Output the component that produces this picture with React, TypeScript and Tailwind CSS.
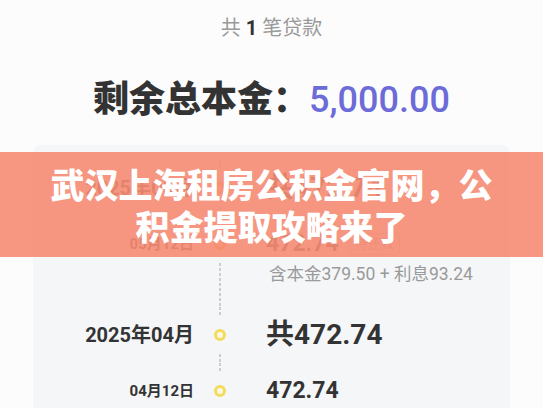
const FONT = { fontFamily: 'Roboto, "Noto Sans CJK SC", "Noto Sans", sans-serif' };

const Seg = ({ className = '' }: { className?: string }) => (
  <div className={`w-[2px] bg-[repeating-linear-gradient(to_bottom,#cdcdcd_0_3px,transparent_3px_5px)] ${className}`} />
);

const Dot = ({ warm }: { warm?: boolean }) => (
  <div
    className={
      warm
        ? 'my-[13px] h-[12px] w-[12px] shrink-0 rounded-full border-[3px] border-[#f9a03a] bg-[#fbe3c4]'
        : 'my-[13px] h-[12px] w-[12px] shrink-0 rounded-full border-[3px] border-[#f3dc5c] bg-[#fbf7e4]'
    }
  />
);

const Rail = ({ warm }: { warm?: boolean }) => (
  <div className="flex w-[26px] flex-col items-center">
    <Seg className="h-[9px]" />
    <Dot warm={warm} />
    <Seg className="flex-1" />
  </div>
);

export default function App() {
  return (
    <div className="relative h-[408px] w-full overflow-hidden bg-[#fcfcfc] text-[#333]" style={FONT}>
      <div className="flex flex-col items-center pt-[14px]">
        <p className="text-[20px] leading-[28px] text-[#999]">
          共 <span className="font-bold text-[#333]">1</span> 笔贷款
        </p>
        <h1 className="mt-[36px] text-[36px] font-black leading-[44px] text-[#333]">
          剩余总本金：<span className="font-medium text-[#6d6bd7]">5,000.00</span>
        </h1>
      </div>

      <div className="mx-[33px] mt-[23px] rounded-lg bg-[#f5f6f8] pt-[15px] pb-10">
        {/* 2025年05月 */}
        <div className="flex">
          <div className="flex h-14 w-[174px] items-center justify-end pr-[13px] text-[20px] font-bold">2025年05月</div>
          <Rail warm />
          <div className="flex h-14 items-center pl-[33px] text-[28px] font-bold">共472.74</div>
        </div>

        {/* 05月12日 */}
        <div className="flex">
          <div className="flex h-14 w-[174px] items-center justify-end pr-[13px] text-[15px] font-bold">05月12日</div>
          <Rail warm />
          <div className="flex flex-col pb-6 pl-[33px]">
            <div className="flex h-14 items-center gap-[10px]">
              <span className="text-[23px] font-bold">472.74</span>
              <span className="rounded-[3px] border border-[#c9c9c9] px-[5px] text-[13px] leading-[20px] text-[#999]">待还款</span>
            </div>
            <div className="-mt-[7px] h-[18px] pl-[3px] text-[17.5px] leading-[18px] text-[#9a9a9a]">含本金379.50 + 利息93.24</div>
          </div>
        </div>

        {/* 2025年04月 */}
        <div className="flex">
          <div className="flex h-14 w-[174px] items-center justify-end pr-[13px] text-[20px] font-bold">2025年04月</div>
          <Rail />
          <div className="flex h-14 items-center pl-[33px] text-[28px] font-bold">共472.74</div>
        </div>

        {/* 04月12日 */}
        <div className="flex">
          <div className="flex h-14 w-[174px] items-center justify-end pr-[13px] text-[15px] font-bold">04月12日</div>
          <Rail />
          <div className="flex h-14 items-center pl-[33px] text-[23px] font-bold">472.74</div>
        </div>
      </div>

      {/* title banner */}
      <div className="absolute inset-x-0 top-[152px] h-[105px] bg-[rgba(246,140,115,0.9)] pt-[13px] text-center text-[34px] font-black leading-[42px] text-white">
        武汉上海租房公积金官网，公
        <br />
        积金提取攻略来了
      </div>
    </div>
  );
}
